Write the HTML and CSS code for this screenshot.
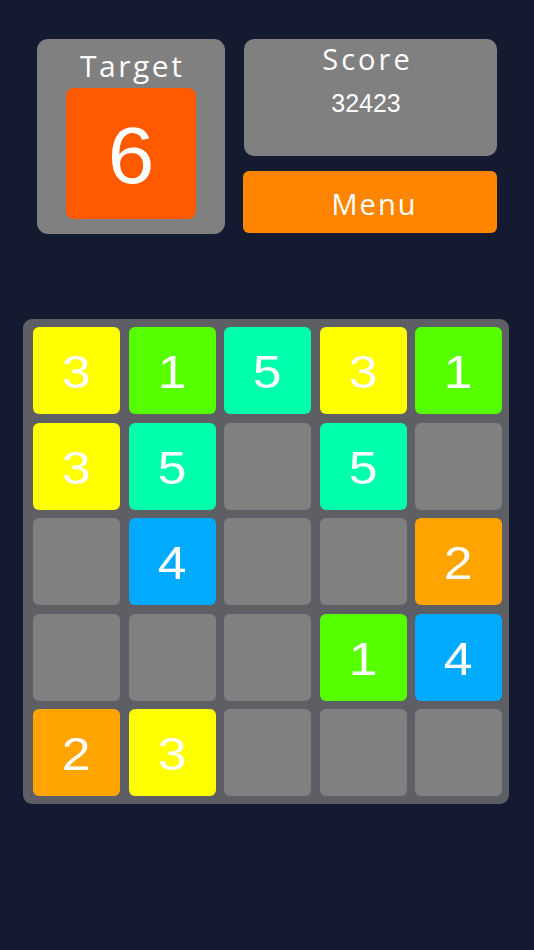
FILE: index.html
```html
<!DOCTYPE html>
<html lang="en">
<head>
    <meta charset="UTF-8">
    <meta name="viewport" content="width=device-width, initial-scale=1.0">
    <title>Target Merge</title>
    <link rel="stylesheet" href="styles.css">
</head>
<body>
    <div class="header">
        <div class="target-box">
            <div class="label">Target</div>
            <div class="target-tile"><span>6</span></div>
        </div>
        <div class="side">
            <div class="score-box">
                <div class="score-label">Score</div>
                <div class="score-value">32423</div>
            </div>
            <button class="menu-btn">Menu</button>
        </div>
    </div>

    <div class="board">
        <div class="tile v3"><span>3</span></div>
        <div class="tile v1"><span>1</span></div>
        <div class="tile v5"><span>5</span></div>
        <div class="tile v3"><span>3</span></div>
        <div class="tile v1"><span>1</span></div>

        <div class="tile v3"><span>3</span></div>
        <div class="tile v5"><span>5</span></div>
        <div class="tile"></div>
        <div class="tile v5"><span>5</span></div>
        <div class="tile"></div>

        <div class="tile"></div>
        <div class="tile v4"><span>4</span></div>
        <div class="tile"></div>
        <div class="tile"></div>
        <div class="tile v2"><span>2</span></div>

        <div class="tile"></div>
        <div class="tile"></div>
        <div class="tile"></div>
        <div class="tile v1"><span>1</span></div>
        <div class="tile v4"><span>4</span></div>

        <div class="tile v2"><span>2</span></div>
        <div class="tile v3"><span>3</span></div>
        <div class="tile"></div>
        <div class="tile"></div>
        <div class="tile"></div>
    </div>
</body>
</html>
```

FILE: styles.css
```css
body {
    margin: 0;
    background-color: #141b30;
    font-family: 'Open Sans', 'Noto Sans', sans-serif;
    color: #fff;
}
.header {
    display: flex;
    gap: 19px;
    padding: 39px 37px 0;
}
.target-box {
    width: 188px;
    height: 195px;
    box-sizing: border-box;
    padding-top: 6px;
    background-color: #808080;
    border-radius: 11px;
    display: flex;
    flex-direction: column;
    align-items: center;
}
.label {
    font-size: 30px;
    line-height: 42px;
    height: 42px;
    letter-spacing: 2.5px;
    margin-right: -2.5px;
    margin-bottom: 1px;
}
.target-tile {
    width: 130px;
    height: 131px;
    box-sizing: border-box;
    padding-top: 5px;
    background-color: #ff5a00;
    border-radius: 8px;
    display: flex;
    align-items: center;
    justify-content: center;
    font-family: 'Liberation Sans', Arial, sans-serif;
    font-size: 79px;
}
.target-tile span {
    transform: scaleX(1.06);
}
.side {
    flex: 1;
    display: flex;
    flex-direction: column;
    gap: 15px;
}
.score-box {
    height: 117px;
    background-color: #808080;
    border-radius: 10px;
    text-align: center;
    padding-right: 9px;
}
.score-label {
    font-size: 29px;
    line-height: 40px;
    letter-spacing: 3px;
    margin-right: -3px;
}
.score-value {
    font-family: 'Liberation Sans', Arial, sans-serif;
    font-size: 25px;
    line-height: 30px;
    margin-top: 9px;
}
.menu-btn {
    height: 62px;
    margin-left: -1px;
    padding: 2px 0 0 9px;
    background-color: #ff8500;
    border: none;
    border-radius: 6px;
    color: #fff;
    font-family: 'Open Sans', 'Noto Sans', sans-serif;
    font-size: 29px;
    letter-spacing: 2px;
}
.board {
    width: 486px;
    height: 485px;
    box-sizing: border-box;
    margin: 85px 0 0 23px;
    padding: 8px 7px 8px 10px;
    background-color: #5e5f65;
    border-radius: 9px;
    display: grid;
    grid-template-columns: repeat(5, 1fr);
    grid-template-rows: repeat(5, 1fr);
    gap: 8.5px;
}
.tile {
    background-color: #808080;
    border-radius: 6px;
    display: flex;
    align-items: center;
    justify-content: center;
    padding-top: 2px;
    font-family: 'Liberation Sans', Arial, sans-serif;
    font-size: 47px;
}
.tile span {
    transform: scaleX(1.1);
}
.v1 { background-color: #55ff00; }
.v2 { background-color: #ffa400; }
.v3 { background-color: #ffff00; }
.v4 { background-color: #00aaff; }
.v5 { background-color: #00ffaa; }
```
